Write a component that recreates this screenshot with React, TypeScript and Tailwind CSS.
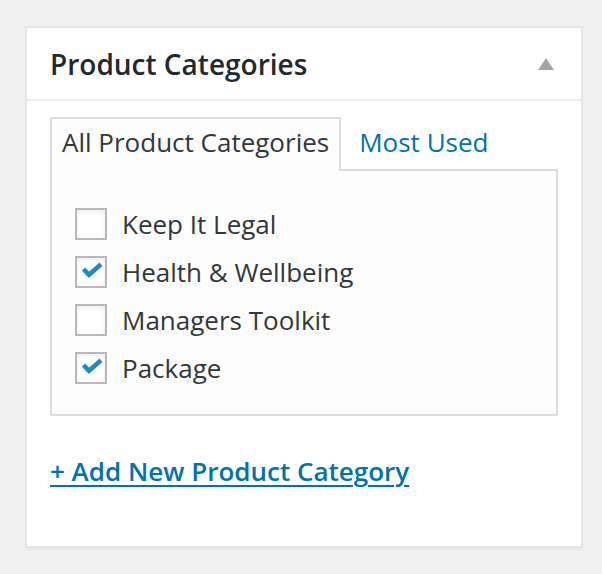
import React from "react";

const CATEGORIES = [
  { name: "Keep It Legal", checked: false },
  { name: "Health & Wellbeing", checked: true },
  { name: "Managers Toolkit", checked: false },
  { name: "Package", checked: true },
];

function Check() {
  return (
    <svg viewBox="0 0 28 28" className="h-[28px] w-[28px]" aria-hidden>
      <path
        d="M6.5 11.2L12 16.8L24 6.2"
        fill="none"
        stroke="#1e8cbe"
        strokeWidth="4.6"
      />
    </svg>
  );
}

export default function App() {
  return (
    <div
      className="min-h-[574px] bg-[#f1f1f1] pl-[25px] pr-[19px] pt-[26px] pb-[26px] text-[#32373c]"
      style={{ fontFamily: '"Open Sans", "Noto Sans", sans-serif' }}
    >
      <div className="flex h-[522px] w-[558px] flex-col border-2 border-[#e5e5e5] bg-white shadow-[0_2px_2px_rgba(0,0,0,0.04)]">
        <div className="flex h-[73px] items-center justify-between border-b-2 border-[#eeeeee] pl-[23px] pr-[27px]">
          <h2 className="text-[28px] font-semibold leading-none text-[#23282d]">
            Product Categories
          </h2>
          <svg viewBox="0 0 16 12" className="h-[12px] w-[16px]" aria-hidden>
            <path d="M8 0l8 12H0z" fill="#a0a5aa" />
          </svg>
        </div>

        <div className="px-[23px] pt-[16px]">
          <div className="flex items-end">
            <div className="relative -mb-[2px] border-2 border-b-0 border-[#dddddd] bg-[#fdfdfd] px-[10px] pb-[13px] pt-[7px] text-[26px] leading-[32px] text-[#32373c]">
              All Product Categories
            </div>
            <a className="px-[18px] pb-[11px] text-[26px] leading-[32px] text-[#0073aa]">
              Most Used
            </a>
          </div>
          <div className="h-[247px] border-2 border-[#dddddd] bg-[#fdfdfd] pl-[23px] pt-[29px]">
            <ul className="flex flex-col">
              {CATEGORIES.map((c) => (
                <li key={c.name} className="flex h-[48px] items-center">
                  <span className="flex h-[32px] w-[32px] items-center justify-center border-2 border-[#b4b9be] bg-white shadow-[inset_0_2px_4px_rgba(0,0,0,0.07)]">
                    {c.checked && <Check />}
                  </span>
                  <span className="ml-[15px] text-[26px] leading-none text-[#32373c]">
                    {c.name}
                  </span>
                </li>
              ))}
            </ul>
          </div>

          <a className="mt-[39px] inline-block text-[26px] font-semibold leading-[32px] text-[#0073aa] underline decoration-2 underline-offset-[4px]">
            + Add New Product Category
          </a>
        </div>
      </div>
    </div>
  );
}
